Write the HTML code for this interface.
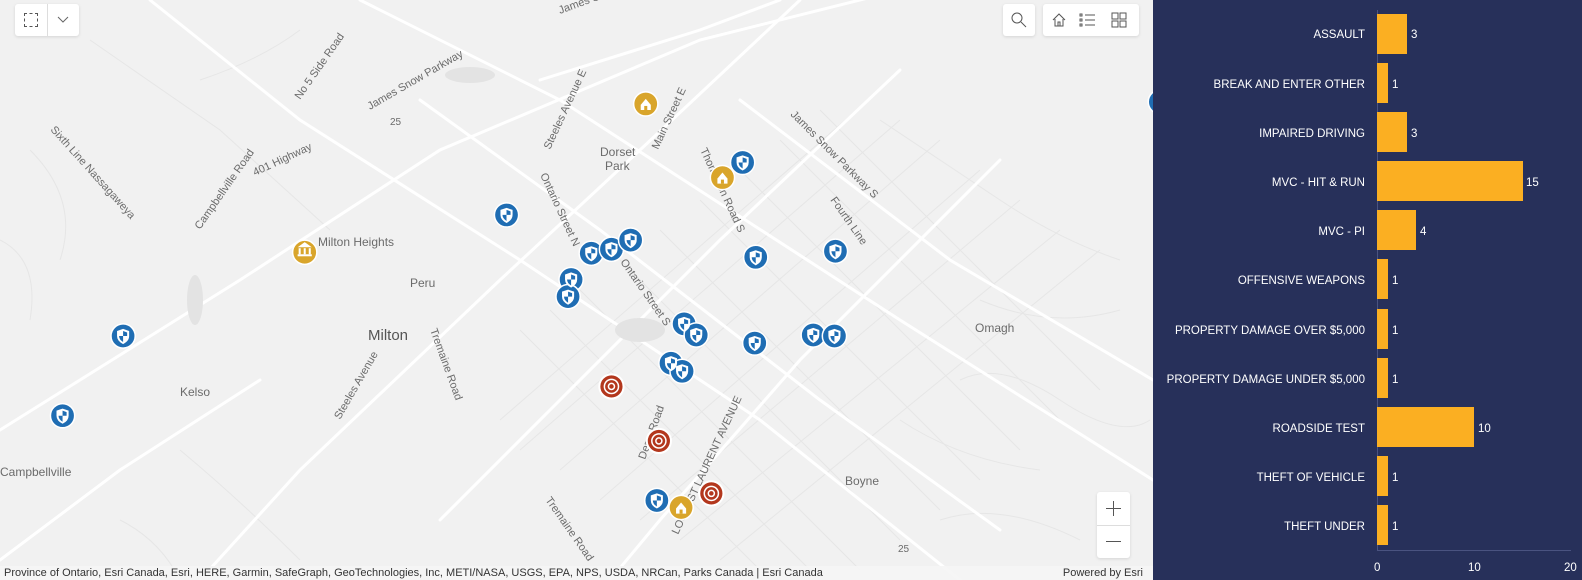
<!DOCTYPE html>
<html><head><meta charset="utf-8"><style>
*{margin:0;padding:0;box-sizing:border-box}
html{width:1582px;height:580px;overflow:hidden}
body{width:1582px;height:580px;overflow:hidden;background:#f0f0f0;font-family:"Liberation Sans",sans-serif;position:relative}
#map{position:absolute;left:0;top:0;width:1153px;height:580px;overflow:hidden;background:#f1f1f1}
#panel{position:absolute;left:1153px;top:0;width:429px;height:580px;background:#27305a}
.btn{position:absolute;background:#fff;border-radius:3px;box-shadow:0 1px 3px rgba(0,0,0,.12)}
.lbl{position:absolute;color:#fff;font-size:11.5px;line-height:14px;right:217px;text-align:right;white-space:nowrap}
.bar{position:absolute;left:1377px;background:#fbaf22;height:40px}
.val{position:absolute;color:#fff;font-size:11.5px;line-height:14px}
.ax{position:absolute;top:561px;color:#fff;font-size:11.5px;line-height:14px}
.attr{position:absolute;left:0;top:566px;width:1153px;height:14px;overflow:hidden;background:rgba(245,245,245,.9);font-size:11px;color:#333;line-height:14px;padding-left:4px}
</style></head><body>
<div id="map">
<svg width="1153" height="580" style="position:absolute;left:0;top:0">
<defs>
<symbol id="sh" viewBox="-12 -12 24 24"><path d="M0 -7 L6 -5 L6 0 Q6 5 0 8 Q-6 5 -6 0 L-6 -5 Z" fill="#fff"/><path d="M0 -5 L4 -3.5 L4 0 L0 0 Z M0 0 L-4 0 Q-4 3.5 0 6 Z" fill="#1f6db3"/></symbol>
<symbol id="hs" viewBox="-12 -12 24 24"><path d="M-5 1 L0 -5 L5 1 V6 H-5 Z" fill="#fff"/><rect x="-1.5" y="2" width="3" height="4" fill="#d9a52b"/></symbol>
</defs>
<g stroke="#e6e6e6" stroke-width="1" fill="none">
<path d="M520 330 L800 610 M550 310 L830 590 M580 290 L860 570 M620 260 L900 540 M660 230 L940 510 M700 200 L980 480 M740 170 L1020 450 M780 140 L1060 420 M820 110 L1100 390"/>
<path d="M500 420 L880 90 M520 450 L900 120 M560 470 L940 140 M600 500 L980 170 M640 520 L1020 200 M680 540 L1060 230 M720 560 L1100 250"/>
<path d="M90 40 L220 130 L330 230"/><path d="M30 150 Q80 200 60 260"/><path d="M180 450 Q240 500 300 560"/>
<path d="M880 120 Q940 160 1000 200 T1120 260"/><path d="M900 420 Q960 460 1040 470"/><path d="M980 300 Q1050 330 1120 310"/>
<path d="M200 80 Q260 60 300 30"/><path d="M0 240 Q40 260 30 320"/><path d="M120 520 Q160 540 180 580"/>
<path d="M960 380 Q1000 360 1060 400 T1150 420"/><path d="M940 520 Q1000 500 1080 540"/>
</g>
<g stroke="#fff" stroke-width="3" fill="none" stroke-linecap="round">
<path d="M0 430 L240 280 L440 150 L700 40 L900 -10"/>
<path d="M150 0 L300 120 L520 260 L760 420 L960 580"/>
<path d="M360 0 L560 100 L900 320 L1153 480"/>
<path d="M420 100 L600 230 L820 400 L1000 530"/>
<path d="M800 0 L640 150 L500 280 L300 470 L200 580"/>
<path d="M900 70 L720 240 L560 400 L440 520"/>
<path d="M1000 160 L800 360 L660 520 L610 580"/>
<path d="M740 100 L950 260 L1153 380"/>
<path d="M0 560 L120 470 L260 380"/>
<path d="M540 80 L700 30 L780 0"/>
</g>
<g fill="#e3e3e3"><ellipse cx="195" cy="300" rx="8" ry="25"/><ellipse cx="640" cy="330" rx="25" ry="12"/><ellipse cx="470" cy="75" rx="25" ry="8"/></g>
<g font-family="Liberation Sans,sans-serif" fill="#6b6b6b" font-size="11">
<text x="368" y="340" font-size="15" fill="#555">Milton</text>
<text x="600" y="156" font-size="12">Dorset</text><text x="605" y="170" font-size="12">Park</text>
<text x="318" y="246" font-size="12">Milton Heights</text>
<text x="410" y="287" font-size="12">Peru</text>
<text x="180" y="396" font-size="12">Kelso</text>
<text x="0" y="476" font-size="12">Campbellville</text>
<text x="975" y="332" font-size="12">Omagh</text>
<text x="845" y="485" font-size="12">Boyne</text>
<text x="560" y="14" transform="rotate(-20 560 14)">James Snow Parkway N</text>
<text x="300" y="100" transform="rotate(-55 300 100)">No 5 Side Road</text>
<text x="370" y="110" transform="rotate(-30 370 110)">James Snow Parkway</text>
<text x="255" y="176" transform="rotate(-25 255 176)">401 Highway</text>
<text x="200" y="230" transform="rotate(-55 200 230)">Campbellville Road</text>
<text x="50" y="130" transform="rotate(48 50 130)">Sixth Line Nassagaweya</text>
<text x="550" y="150" transform="rotate(-65 550 150)">Steeles Avenue E</text>
<text x="658" y="150" transform="rotate(-65 658 150)">Main Street E</text>
<text x="540" y="175" transform="rotate(65 540 175)">Ontario Street N</text>
<text x="700" y="150" transform="rotate(65 700 150)">Thompson Road S</text>
<text x="790" y="115" transform="rotate(45 790 115)">James Snow Parkway S</text>
<text x="830" y="200" transform="rotate(55 830 200)">Fourth Line</text>
<text x="620" y="262" transform="rotate(55 620 262)">Ontario Street S</text>
<text x="430" y="330" transform="rotate(70 430 330)">Tremaine Road</text>
<text x="340" y="420" transform="rotate(-60 340 420)">Steeles Avenue</text>
<text x="645" y="460" transform="rotate(-70 645 460)">Derry Road</text>
<text x="678" y="535" transform="rotate(-65 678 535)">LOUIS ST LAURENT AVENUE</text>
<text x="545" y="500" transform="rotate(55 545 500)">Tremaine Road</text>
<text x="390" y="125" font-size="10">25</text><text x="898" y="552" font-size="10">25</text>
</g>
<g transform="scale(1.009)">
<g fill="#1f6db3" stroke="#fff" stroke-width="1.5">
<circle cx="122" cy="333" r="12"/><circle cx="62" cy="412" r="12"/><circle cx="502" cy="213" r="12"/>
<circle cx="586" cy="251" r="12"/><circle cx="606" cy="247" r="12"/><circle cx="625" cy="238" r="12"/>
<circle cx="566" cy="277" r="12"/><circle cx="563" cy="294" r="12"/><circle cx="678" cy="321" r="12"/>
<circle cx="690" cy="332" r="12"/><circle cx="749" cy="255" r="12"/><circle cx="736" cy="161" r="12"/>
<circle cx="828" cy="249" r="12"/><circle cx="748" cy="340" r="12"/><circle cx="806" cy="332" r="12"/>
<circle cx="827" cy="333" r="12"/><circle cx="665" cy="360" r="12"/><circle cx="676" cy="368" r="12"/>
<circle cx="651" cy="496" r="12"/><circle cx="1150" cy="101" r="12"/>
</g>
<g>
<use href="#sh" x="110" y="321" width="24" height="24"/><use href="#sh" x="50" y="400" width="24" height="24"/><use href="#sh" x="490" y="201" width="24" height="24"/>
<use href="#sh" x="574" y="239" width="24" height="24"/><use href="#sh" x="594" y="235" width="24" height="24"/><use href="#sh" x="613" y="226" width="24" height="24"/>
<use href="#sh" x="554" y="265" width="24" height="24"/><use href="#sh" x="551" y="282" width="24" height="24"/><use href="#sh" x="666" y="309" width="24" height="24"/>
<use href="#sh" x="678" y="320" width="24" height="24"/><use href="#sh" x="737" y="243" width="24" height="24"/><use href="#sh" x="724" y="149" width="24" height="24"/>
<use href="#sh" x="816" y="237" width="24" height="24"/><use href="#sh" x="736" y="328" width="24" height="24"/><use href="#sh" x="794" y="320" width="24" height="24"/>
<use href="#sh" x="815" y="321" width="24" height="24"/><use href="#sh" x="653" y="348" width="24" height="24"/><use href="#sh" x="664" y="356" width="24" height="24"/>
<use href="#sh" x="639" y="484" width="24" height="24"/>
</g>
<g fill="#d9a52b" stroke="#fff" stroke-width="1.5">
<circle cx="640" cy="103" r="12"/><circle cx="716" cy="176" r="12"/><circle cx="302" cy="250" r="12"/><circle cx="675" cy="503" r="12"/>
</g>
<use href="#hs" x="628" y="91" width="24" height="24"/><use href="#hs" x="704" y="164" width="24" height="24"/><use href="#hs" x="663" y="491" width="24" height="24"/>
<g fill="#fff"><rect x="295" y="252" width="14" height="2"/><rect x="296" y="246" width="2" height="6"/><rect x="301" y="246" width="2" height="6"/><rect x="306" y="246" width="2" height="6"/><path d="M295 245 L302 240 L309 245 Z"/></g>
<g fill="#b3371d" stroke="#fff" stroke-width="2">
<circle cx="606" cy="383" r="12"/><circle cx="653" cy="437" r="12"/><circle cx="705" cy="489" r="12"/>
</g>
<g fill="none" stroke="#fff" stroke-width="1.5">
<circle cx="606" cy="383" r="7"/><circle cx="653" cy="437" r="7"/><circle cx="705" cy="489" r="7"/>
<circle cx="606" cy="383" r="3"/><circle cx="653" cy="437" r="3"/><circle cx="705" cy="489" r="3"/>
</g>
</g>
</svg>
<div class="btn" style="left:15px;top:4px;width:64px;height:32px">
<div style="position:absolute;left:32px;top:0;width:1px;height:32px;background:#ddd"></div>
<div style="position:absolute;left:9px;top:9px;width:14px;height:14px;border:1px dashed #555"></div>
<svg style="position:absolute;left:42px;top:12px" width="12" height="8"><path d="M1 1 L6 6 L11 1" stroke="#666" fill="none"/></svg>
</div>
<div class="btn" style="left:1003px;top:4px;width:32px;height:32px">
<svg width="32" height="32"><circle cx="14" cy="14" r="5" stroke="#555" fill="none"/><path d="M18 18 L23 23" stroke="#555"/></svg>
</div>
<div class="btn" style="left:1043px;top:4px;width:96px;height:32px">
<svg width="96" height="32" stroke="#555" fill="none"><path d="M10 16 L16 10 L22 16 M12 15 V22 H20 V15 M15 22 V18 H17 V22"/>
<path d="M42 11 H52 M42 16 H52 M42 21 H52"/><rect x="37" y="10" width="2" height="2"/><rect x="37" y="15" width="2" height="2"/><rect x="37" y="20" width="2" height="2"/>
<rect x="69" y="9" width="6" height="6"/><rect x="77" y="9" width="6" height="6"/><rect x="69" y="17" width="6" height="6"/><rect x="77" y="17" width="6" height="6"/></svg>
</div>
<div class="btn" style="left:1097px;top:492px;width:33px;height:66px">
<div style="position:absolute;left:0;top:33px;width:33px;height:1px;background:#ddd"></div>
<div style="position:absolute;left:9px;top:16px;width:15px;height:1px;background:#555"></div>
<div style="position:absolute;left:16px;top:9px;width:1px;height:15px;background:#555"></div>
<div style="position:absolute;left:9px;top:49px;width:15px;height:1px;background:#555"></div>
</div>
<div class="attr">Province of Ontario, Esri Canada, Esri, HERE, Garmin, SafeGraph, GeoTechnologies, Inc, METI/NASA, USGS, EPA, NPS, USDA, NRCan, Parks Canada | Esri Canada<span style="position:absolute;right:10px;top:0">Powered by Esri</span></div>
</div>
<div id="panel"></div>
<div style="position:absolute;left:1377px;top:10px;width:1px;height:541px;background:#4a5380"></div>
<div style="position:absolute;left:1377px;top:550px;width:194px;height:1px;background:#4a5380"></div>
<div class="lbl" style="top:28px">ASSAULT</div><div class="bar" style="top:14px;width:30px"></div><div class="val" style="top:28px;left:1411px">3</div>
<div class="lbl" style="top:78px">BREAK AND ENTER OTHER</div><div class="bar" style="top:63px;width:11px"></div><div class="val" style="top:78px;left:1392px">1</div>
<div class="lbl" style="top:127px">IMPAIRED DRIVING</div><div class="bar" style="top:112px;width:30px"></div><div class="val" style="top:127px;left:1411px">3</div>
<div class="lbl" style="top:176px">MVC - HIT &amp; RUN</div><div class="bar" style="top:161px;width:146px"></div><div class="val" style="top:176px;left:1526px">15</div>
<div class="lbl" style="top:225px">MVC - PI</div><div class="bar" style="top:210px;width:39px"></div><div class="val" style="top:225px;left:1420px">4</div>
<div class="lbl" style="top:274px">OFFENSIVE WEAPONS</div><div class="bar" style="top:259px;width:11px"></div><div class="val" style="top:274px;left:1392px">1</div>
<div class="lbl" style="top:324px">PROPERTY DAMAGE OVER $5,000</div><div class="bar" style="top:309px;width:11px"></div><div class="val" style="top:324px;left:1392px">1</div>
<div class="lbl" style="top:373px">PROPERTY DAMAGE UNDER $5,000</div><div class="bar" style="top:358px;width:11px"></div><div class="val" style="top:373px;left:1392px">1</div>
<div class="lbl" style="top:422px">ROADSIDE TEST</div><div class="bar" style="top:407px;width:97px"></div><div class="val" style="top:422px;left:1478px">10</div>
<div class="lbl" style="top:471px">THEFT OF VEHICLE</div><div class="bar" style="top:456px;width:11px"></div><div class="val" style="top:471px;left:1392px">1</div>
<div class="lbl" style="top:520px">THEFT UNDER</div><div class="bar" style="top:505px;width:11px"></div><div class="val" style="top:520px;left:1392px">1</div>
<div class="ax" style="left:1374px">0</div><div class="ax" style="left:1468px">10</div><div class="ax" style="left:1564px">20</div>
</body></html>
